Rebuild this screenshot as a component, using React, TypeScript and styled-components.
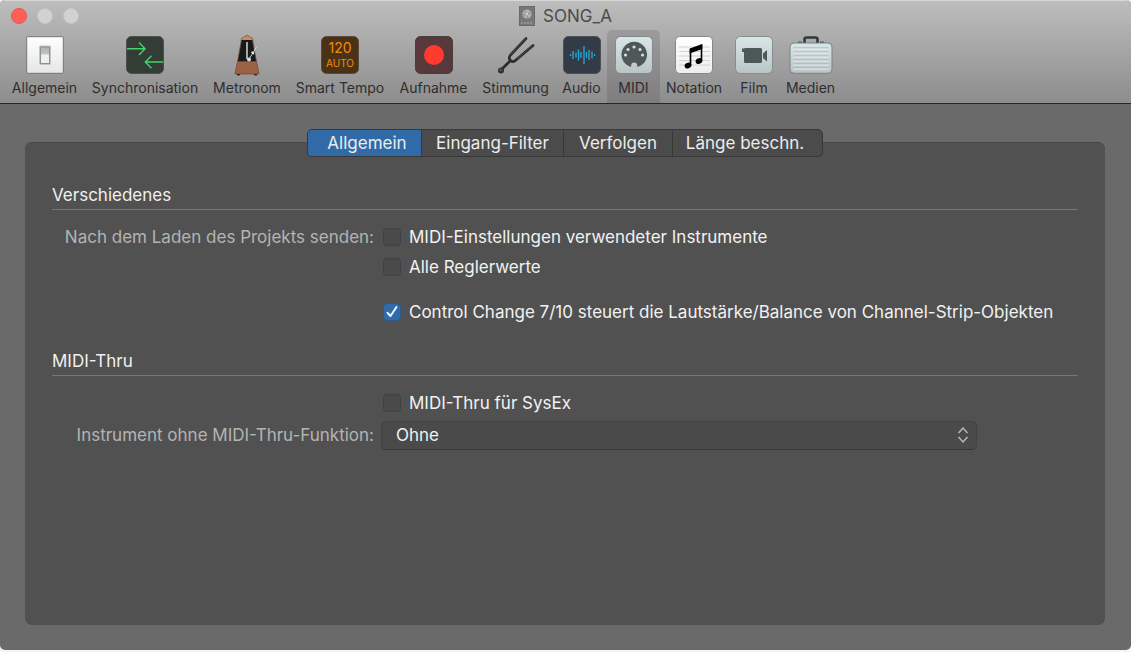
import React, { useState } from "react";
import styled, { createGlobalStyle } from "styled-components";

const GlobalStyle = createGlobalStyle`
  * { box-sizing: border-box; }
  body { margin: 0; background: #f4f4f4; }
  body, button, input, select {
    font-family: Inter, "Liberation Sans", sans-serif;
  }
`;

const Window = styled.div`
  display: flex;
  flex-direction: column;
  min-height: calc(100vh - 2px);
  background: #6a6a6a;
  border-radius: 5px;
  overflow: hidden;
`;

const Header = styled.header`
  background: linear-gradient(#bdbdbd, #8d8d8d);
  border-top: 1px solid #d8d8d8;
  border-bottom: 1px solid #262626;
`;

const TitleBar = styled.div`
  display: grid;
  grid-template-columns: 1fr auto 1fr;
  align-items: center;
  height: 29px;
`;

const Lights = styled.div`
  display: flex;
  gap: 10px;
  padding-left: 11px;
`;

const Light = styled.button<{ $color: string; $edge: string }>`
  width: 16px;
  height: 16px;
  padding: 0;
  border: 1px solid ${(p) => p.$edge};
  border-radius: 50%;
  background: ${(p) => p.$color};
`;

const Title = styled.h1`
  display: flex;
  align-items: center;
  gap: 8px;
  margin: 0;
  color: #4b4b4b;
  font-size: 17px;
  font-weight: 400;
  line-height: 20px;
`;

const Toolbar = styled.nav`
  display: flex;
  padding-left: 5px;
`;

const Tool = styled.button<{ $width: number; $active: boolean }>`
  display: flex;
  flex: 0 0 ${(p) => p.$width}px;
  flex-direction: column;
  align-items: center;
  gap: 2px;
  height: 73px;
  padding: 4px 0 0;
  border: 0;
  border-radius: 5px 5px 0 0;
  background: ${(p) => (p.$active ? "rgba(0, 0, 0, 0.11)" : "transparent")};
  color: #2e2e2e;
  font-size: 14px;
  line-height: 20px;
  white-space: nowrap;

  svg { display: block; flex: none; }
`;

const Body = styled.main`
  display: flex;
  flex: 1;
  flex-direction: column;
  padding: 25px 26px 25px 25px;
`;

const Tabs = styled.div`
  display: flex;
  align-self: center;
  z-index: 1;
  height: 28px;
  margin-bottom: -15px;
  border: 1px solid #383838;
  border-radius: 5px;
  background: #4b4b4b;
  overflow: hidden;
`;

const Tab = styled.button<{ $width: number; $active: boolean }>`
  width: ${(p) => p.$width}px;
  padding: 0;
  border: 0;
  background: ${(p) => (p.$active ? "#306ba8" : "transparent")};
  color: #ececec;
  font-size: 17px;
  line-height: 26px;
  white-space: nowrap;

  & + & { border-left: 1px solid #383838; }
  &:first-child { padding-left: 5px; }
  &:last-child { padding-right: 5px; }
`;

const Panel = styled.div`
  flex: 1;
  padding: 40px 27px 27px;
  border-top: 1px solid #484848;
  border-radius: 7px;
  background: #515151;
`;

const Section = styled.section`
  & + & { margin-top: 22px; }
`;

const SectionTitle = styled.h2`
  margin: 0 0 12px;
  padding-bottom: 2px;
  border-bottom: 1px solid #777777;
  color: #f0f0f0;
  font-size: 17px;
  font-weight: 400;
  line-height: 24px;
`;

const Row = styled.div<{ $height: number; $before?: number }>`
  display: grid;
  grid-template-columns: 322px 1fr;
  column-gap: 7px;
  align-items: center;
  height: ${(p) => p.$height}px;
  margin-top: ${(p) => p.$before ?? 0}px;
`;

const RowLabel = styled.label`
  color: #b4b4b4;
  font-size: 17px;
  line-height: 24px;
  text-align: right;
  white-space: nowrap;
`;

const Check = styled.label`
  display: flex;
  grid-column: 2;
  align-items: center;
  gap: 8px;
  padding-left: 2px;
  color: #f2f2f2;
  font-size: 17px;
  line-height: 24px;
  white-space: nowrap;
`;

const CheckBoxArea = styled.span`
  display: grid;

  & > * { grid-area: 1 / 1; }
  svg { pointer-events: none; }
`;

const CheckInput = styled.input`
  appearance: none;
  width: 18px;
  height: 18px;
  margin: 0;
  border: 1px solid #414141;
  border-radius: 4px;
  background: #4a4a4a;

  &:checked {
    border-color: #28588c;
    background: #306cac;
  }
`;

const SelectArea = styled.span`
  display: grid;
  max-width: 596px;

  & > * { grid-area: 1 / 1; }
  svg {
    align-self: center;
    justify-self: end;
    margin-right: 7px;
    pointer-events: none;
  }
`;

const Select = styled.select`
  appearance: none;
  height: 29px;
  padding: 0 14px;
  border: 1px solid #424242;
  border-bottom-color: #383838;
  border-radius: 5px;
  background: #4a4a4a;
  color: #f2f2f2;
  font-size: 17px;
`;

const DocIcon = () => (
  <svg width="16" height="20" viewBox="0 0 16 20" aria-hidden="true">
    <rect x="0.5" y="0.5" width="15" height="19" fill="#777" stroke="#6a6a6a" />
    <circle cx="8" cy="8" r="4.6" fill="#adb2b5" />
    <path d="M8 8 5 4.6M8 8l4.3-1M8 8l1 4.4M8 8l-4.4 1.3" stroke="#8b8f91" strokeWidth="1" />
    <circle cx="8" cy="8" r="1.2" fill="#d2d5d7" />
    <path d="M2 17h12" stroke="#aaa" strokeWidth="1" strokeDasharray="2 1" />
  </svg>
);

const SwitchIcon = () => (
  <svg width="38" height="38" viewBox="0 0 38 38">
    <defs>
      <linearGradient id="plate" x2="0" y2="1"><stop stopColor="#fff" /><stop offset="1" stopColor="#e5e6e9" /></linearGradient>
      <linearGradient id="rocker" x2="0" y2="1"><stop stopColor="#aeb2b1" /><stop offset="1" stopColor="#dcdedd" /></linearGradient>
    </defs>
    <rect x="0.7" y="0.7" width="36.6" height="36.6" rx="1" fill="url(#plate)" stroke="#767676" />
    <rect x="13.5" y="10" width="11" height="18.5" rx="1" fill="#8d918f" stroke="#c3c5c5" />
    <rect x="15" y="11.5" width="8" height="15.5" fill="url(#rocker)" />
    <rect x="15" y="18.5" width="8" height="8.5" fill="#eef0ef" />
  </svg>
);

const SyncIcon = () => (
  <svg width="38" height="38" viewBox="0 0 38 38" fill="none">
    <rect x="0.5" y="0.5" width="37" height="37" rx="5" fill="#343c36" stroke="#4c514d" />
    <path d="M1 12.700h18M13 6.500l6 6.200-6 6.200M37 26H19M25.500 19.800 19.300 26l6.200 6.200" stroke="#45d467" strokeWidth="1.4" />
  </svg>
);

const MetronomeIcon = () => (
  <svg width="28" height="42" viewBox="0 0 28 42">
    <path d="M8.500 4.500 14 1l5.500 3.500L20 7H8z" fill="#c58a68" stroke="#704a36" strokeWidth="0.700" />
    <path d="M8.500 6h11L23.500 28H4.500z" fill="#17191a" />
    <path d="M8.500 6 4.500 28M19.500 6 23.500 28" stroke="#6d4a38" strokeWidth="0.800" />
    <path d="M4.500 27.500h19L26 40H2z" fill="#9b6145" stroke="#784733" strokeWidth="0.800" />
    <path d="M4 40h3v1.500H4zM21 40h3v1.500h-3z" fill="#3b2a22" />
    <path d="M13 8h2v17h-2z" fill="#a5a8a8" />
    <path d="M15.500 26 23.500 13" stroke="#d7dadb" strokeWidth="1" />
    <circle cx="16" cy="25.500" r="2" fill="#d9dcdd" />
    <path d="m18.500 18 2.500 1.700" stroke="#eee" strokeWidth="1.800" />
  </svg>
);

const TempoIcon = () => (
  <svg width="38" height="38" viewBox="0 0 38 38" textAnchor="middle" fill="#f28b0d">
    <rect x="0.5" y="0.5" width="37" height="37" rx="5" fill="#4a3217" stroke="#5b4a37" />
    <text x="19" y="17" fontSize="14">120</text>
    <text x="19" y="31" fontSize="10">AUTO</text>
  </svg>
);

const RecordIcon = () => (
  <svg width="38" height="38" viewBox="0 0 38 38">
    <rect x="0.5" y="0.5" width="37" height="37" rx="5" fill="#57393b" stroke="#4b3c3d" />
    <circle cx="19" cy="19" r="10" fill="#ff3b30" />
  </svg>
);

const ForkIcon = () => (
  <svg width="38" height="38" viewBox="0 0 38 38" fill="none" strokeLinecap="round">
    <path d="M29 2.500 13.500 19c-2 2.500-1.500 4 0 5.500s3.500 1.500 5.500-.5L36 9.500M13 25 4 34" stroke="#2b2d2e" strokeWidth="2.700" />
    <path d="M28.500 2.500 13 19M35.500 9.500 20 23" stroke="#5b5e5f" strokeWidth="0.600" />
    <circle cx="4" cy="34.500" r="3" fill="#2f3132" />
    <circle cx="3.500" cy="34" r="1" fill="#6a6d6e" />
  </svg>
);

const AudioIcon = () => (
  <svg width="38" height="38" viewBox="0 0 38 38">
    <rect x="0.5" y="0.5" width="37" height="37" rx="5" fill="#333b47" stroke="#4a505a" />
    <path
      d="M7.500 18v2M10 15v8M13 16.500v5M15.500 13.500v11M18 16v6M21 10v18M23.500 16v6M26 14v10M29 15.500v7M31.500 18v2"
      stroke="#2ca9dc"
      strokeWidth="1.300"
    />
  </svg>
);

const tileGradient = (id: string) => (
  <defs>
    <linearGradient id={id} x2="0" y2="1"><stop stopColor="#d9e6e7" /><stop offset="1" stopColor="#b9c4c5" /></linearGradient>
  </defs>
);

const MidiIcon = () => (
  <svg width="38" height="38" viewBox="0 0 38 38">
    {tileGradient("midiTile")}
    <rect x="0.5" y="0.5" width="37" height="37" rx="5" fill="url(#midiTile)" stroke="#818989" />
    <path d="M16 31a12.800 12.800 0 1 1 6.500 0l-.3-1.500a3 3 0 0 0-6 0z" fill="#4e5957" />
    <g fill="#d5e0e1">
      <circle cx="10.500" cy="19" r="1.600" /><circle cx="13" cy="13.500" r="1.600" /><circle cx="19" cy="11" r="1.600" />
      <circle cx="25" cy="13.500" r="1.600" /><circle cx="27.500" cy="19" r="1.600" />
    </g>
  </svg>
);

const NotationIcon = () => (
  <svg width="38" height="38" viewBox="0 0 38 38">
    <defs>
      <linearGradient id="paper" x2="0" y2="1"><stop stopColor="#fff" /><stop offset="1" stopColor="#ededed" /></linearGradient>
    </defs>
    <rect x="0.5" y="0.5" width="37" height="37" rx="4" fill="url(#paper)" stroke="#858585" />
    <path d="M4 11h31M4 15.500h31M4 20h31M4 24.500h31M4 29h31" stroke="#cfcfcf" strokeWidth="0.900" />
    <path d="M15.500 13v16.500M26.500 8.500v16" stroke="#000" strokeWidth="1.600" />
    <path d="M14.700 12.500 27.300 8v5l-12.600 4.500z" />
    <ellipse cx="13" cy="29.500" rx="3.500" ry="2.700" transform="rotate(-25 13 29.500)" />
    <ellipse cx="24" cy="25" rx="3.500" ry="2.700" transform="rotate(-25 24 25)" />
  </svg>
);

const FilmIcon = () => (
  <svg width="38" height="38" viewBox="0 0 38 38">
    {tileGradient("filmTile")}
    <rect x="0.5" y="0.5" width="37" height="37" rx="5" fill="url(#filmTile)" stroke="#858d8d" />
    <path d="M10.500 12h15a1.500 1.500 0 0 1 1.500 1.500v12a1.500 1.500 0 0 1-1.500 1.500h-15A1.500 1.500 0 0 1 9 25.500V16H7v-3.500h2c.2-.3.800-.5 1.500-.5z" fill="#4d5856" />
    <path d="M28 17.500 32 14v11.500l-4-3.500z" fill="#4d5856" />
  </svg>
);

const MediaIcon = () => (
  <svg width="44" height="38" viewBox="0 0 44 38" fill="none">
    {tileGradient("caseTile")}
    <path d="M15.500 8V3.500q0-2 2-2h9q2 0 2 2V8" stroke="#343838" strokeWidth="2.600" />
    <path d="M9 6.500h4M31 6.500h4" stroke="#555b5b" strokeWidth="2" />
    <rect x="1" y="7" width="42" height="30.300" rx="4" fill="url(#caseTile)" stroke="#798282" />
    <path d="M4.500 12h35M4.500 16h35M4.500 20h35M4.500 24h35M4.500 28h35M4.500 32h35" stroke="#a3aeb0" strokeWidth="1.200" />
    <path d="M4.500 13h35M4.500 17h35M4.500 21h35M4.500 25h35M4.500 29h35M4.500 33h35" stroke="#e6f1f2" strokeWidth="1" />
  </svg>
);

const tools = [
  { name: "Allgemein", width: 79, icon: <SwitchIcon /> },
  { name: "Synchronisation", width: 122, icon: <SyncIcon /> },
  { name: "Metronom", width: 82, icon: <MetronomeIcon /> },
  { name: "Smart Tempo", width: 104, icon: <TempoIcon /> },
  { name: "Aufnahme", width: 83, icon: <RecordIcon /> },
  { name: "Stimmung", width: 81, icon: <ForkIcon /> },
  { name: "Audio", width: 51, icon: <AudioIcon /> },
  { name: "MIDI", width: 53, icon: <MidiIcon /> },
  { name: "Notation", width: 68, icon: <NotationIcon /> },
  { name: "Film", width: 52, icon: <FilmIcon /> },
  { name: "Medien", width: 61, icon: <MediaIcon /> },
];

const IconSlot = styled.span`
  display: flex;
  flex: none;
  align-items: center;
  justify-content: center;
  height: 42px;
`;

const tabs = [
  { name: "Allgemein", width: 113 },
  { name: "Eingang-Filter", width: 142 },
  { name: "Verfolgen", width: 109 },
  { name: "Länge beschn.", width: 150 },
];

type CheckBoxProps = { id: string; text: string; initial?: boolean };

const CheckBox = ({ id, text, initial = false }: CheckBoxProps) => {
  const [checked, setChecked] = useState(initial);
  return (
    <Check htmlFor={id}>
      <CheckBoxArea>
        <CheckInput id={id} type="checkbox" checked={checked} onChange={(e) => setChecked(e.target.checked)} />
        {checked && (
          <svg width="18" height="18" viewBox="0 0 18 18" fill="none" aria-hidden="true">
            <path d="M4.500 9.800 7.500 13l6-9" stroke="#fff" strokeWidth="1.900" strokeLinecap="round" strokeLinejoin="round" />
          </svg>
        )}
      </CheckBoxArea>
      {text}
    </Check>
  );
};

export default function App() {
  const [tool, setTool] = useState("MIDI");
  const [tab, setTab] = useState("Allgemein");

  return (
    <>
      <GlobalStyle />
      <Window>
        <Header>
          <TitleBar>
            <Lights>
              <Light $color="#ff5f57" $edge="#e9544d" aria-label="Schließen" />
              <Light $color="#d2d2d2" $edge="#c6c6c6" aria-label="Minimieren" />
              <Light $color="#d2d2d2" $edge="#c6c6c6" aria-label="Zoomen" />
            </Lights>
            <Title><DocIcon />SONG_A</Title>
          </TitleBar>
          <Toolbar>
            {tools.map((t) => (
              <Tool key={t.name} $width={t.width} $active={t.name === tool} onClick={() => setTool(t.name)}>
                <IconSlot>{t.icon}</IconSlot>
                {t.name}
              </Tool>
            ))}
          </Toolbar>
        </Header>
        <Body>
          <Tabs role="tablist">
            {tabs.map((t) => (
              <Tab
                key={t.name}
                role="tab"
                aria-selected={t.name === tab}
                $width={t.width}
                $active={t.name === tab}
                onClick={() => setTab(t.name)}
              >
                {t.name}
              </Tab>
            ))}
          </Tabs>
          <Panel>
            <Section>
              <SectionTitle>Verschiedenes</SectionTitle>
              <Row $height={30}>
                <RowLabel htmlFor="used">Nach dem Laden des Projekts senden:</RowLabel>
                <CheckBox id="used" text="MIDI-Einstellungen verwendeter Instrumente" />
              </Row>
              <Row $height={30}>
                <CheckBox id="faders" text="Alle Reglerwerte" />
              </Row>
              <Row $height={30} $before={15}>
                <CheckBox
                  id="cc"
                  initial
                  text="Control Change 7/10 steuert die Lautstärke/Balance von Channel-Strip-Objekten"
                />
              </Row>
            </Section>
            <Section>
              <SectionTitle>MIDI-Thru</SectionTitle>
              <Row $height={30}>
                <CheckBox id="sysex" text="MIDI-Thru für SysEx" />
              </Row>
              <Row $height={34}>
                <RowLabel htmlFor="thru">Instrument ohne MIDI-Thru-Funktion:</RowLabel>
                <SelectArea>
                  <Select id="thru" defaultValue="Ohne">
                    <option>Ohne</option>
                  </Select>
                  <svg width="14" height="18" viewBox="0 0 14 18" fill="none" aria-hidden="true">
                    <path d="m2.500 7 4.500-5 4.500 5M2.500 11l4.500 5 4.500-5" stroke="#b9b9b9" strokeWidth="1.500" />
                  </svg>
                </SelectArea>
              </Row>
            </Section>
          </Panel>
        </Body>
      </Window>
    </>
  );
}
